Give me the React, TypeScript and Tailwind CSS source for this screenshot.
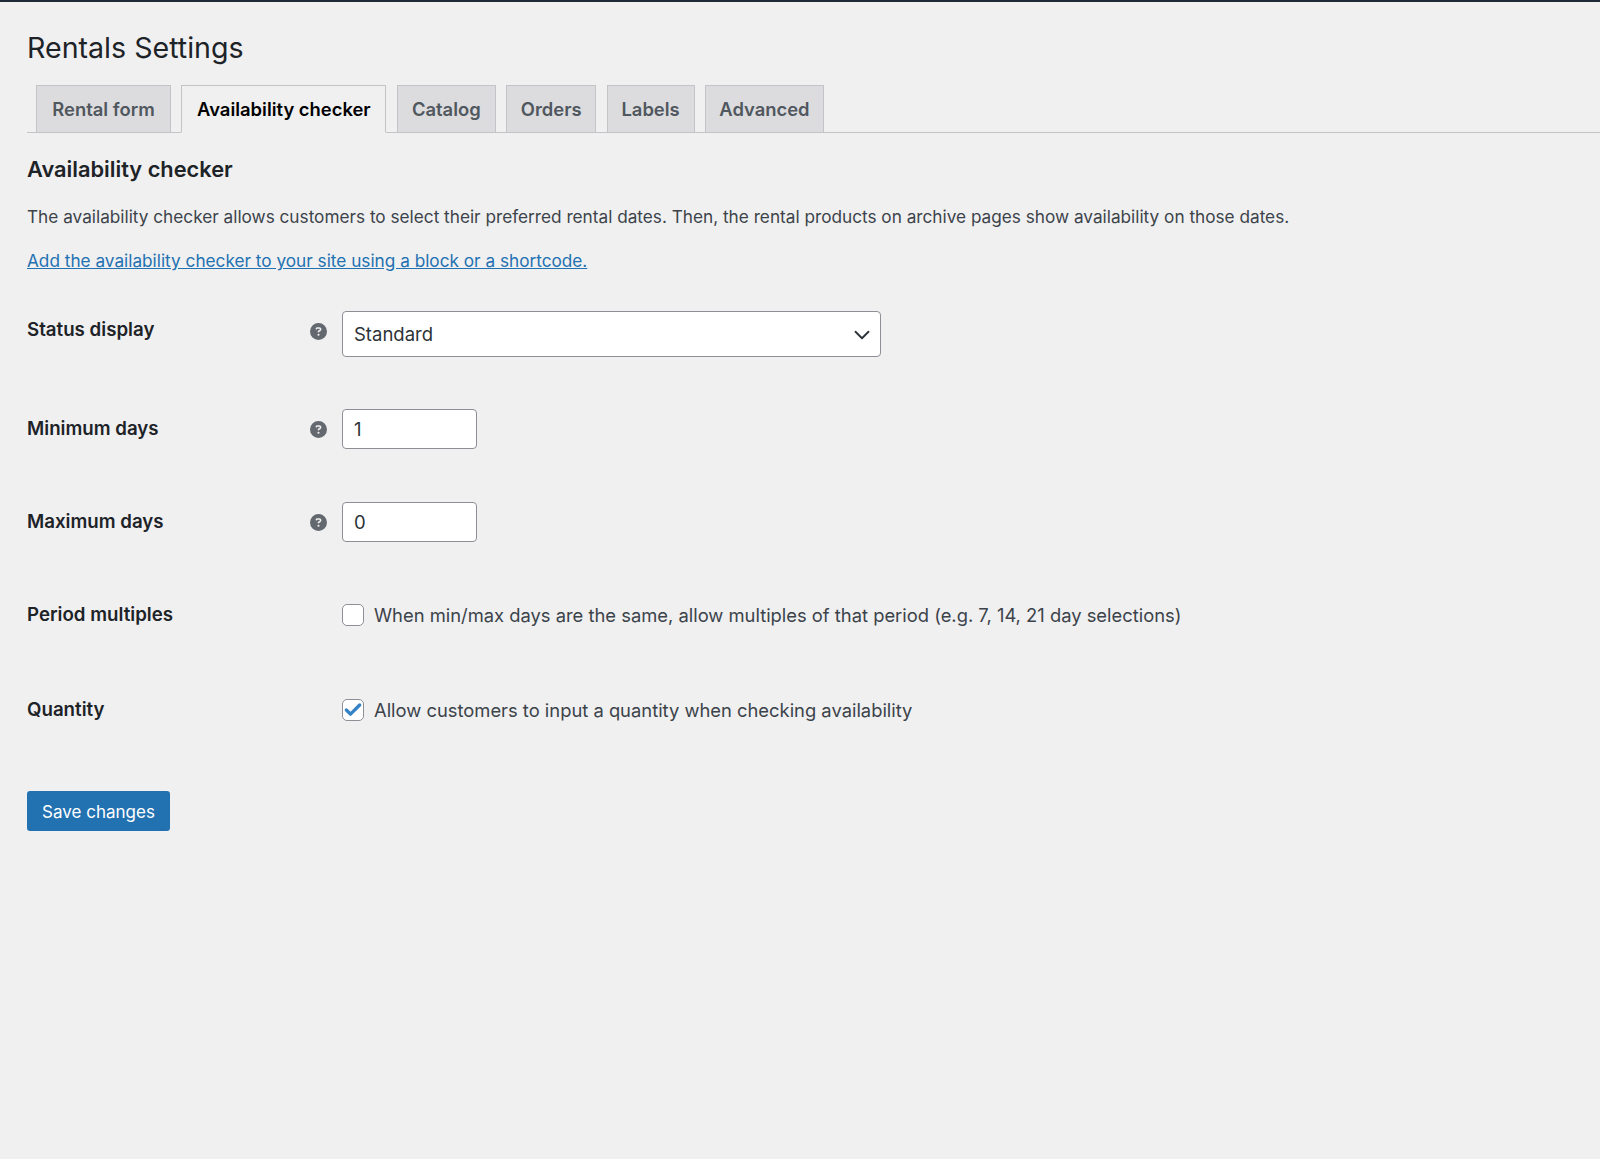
import React from "react";
import { FaCircleQuestion } from "react-icons/fa6";
import { ChevronDown, Check } from "lucide-react";

const tabs = [
  { name: "Rental form", width: "w-[135px]" },
  { name: "Availability checker", width: "w-[205px]", active: true },
  { name: "Catalog", width: "w-[99px]" },
  { name: "Orders", width: "w-[90px]" },
  { name: "Labels", width: "w-[88px]" },
  { name: "Advanced", width: "w-[119px]" },
];

const Row = ({
  label,
  help,
  className,
  labelClass,
  helpClass,
  children,
}: {
  label: string;
  help?: boolean;
  className: string;
  labelClass?: string;
  helpClass?: string;
  children: React.ReactNode;
}) => (
  <div className={`flex items-center ${className}`}>
    <div className={`w-[282px] shrink-0 text-[18.7px] font-semibold text-[#1d2327] ${labelClass ?? ""}`}>{label}</div>
    <div className={`w-[33px] shrink-0 pl-[1px] ${helpClass ?? ""}`}>
      {help && <FaCircleQuestion className="w-[17px] h-[17px] text-[#646970]" />}
    </div>
    {children}
  </div>
);

const Checkbox = ({ checked }: { checked?: boolean }) => (
  <span className="w-[22px] h-[22px] bg-white border-[1.5px] border-[#8c8f94] rounded-[5px] flex items-center justify-center shrink-0">
    {checked && <Check className="w-[20px] h-[20px] text-[#3582c4]" strokeWidth={4} />}
  </span>
);

export default function App() {
  return (
    <div className="h-[1159px] overflow-hidden bg-[#f0f0f1] border-t-2 border-[#1f2b3a] pl-[27px] font-['Inter','Liberation_Sans',sans-serif]">
      <h1 className="text-[28.6px] leading-[36px] pt-[28px] text-[#1d2327]">Rentals Settings</h1>

      <div className="flex mt-[19px] pl-[9px] gap-[10.4px] border-b border-[#c3c4c7] h-[48px]">
        {tabs.map((t) => (
          <div
            key={t.name}
            className={`${t.width} h-[48px] pt-[1px] flex items-center justify-center border border-[#c3c4c7] text-[18.4px] font-semibold ${
              t.active ? "bg-[#f0f0f1] border-b-[#f0f0f1] text-black" : "bg-[#dcdcde] text-[#50575e]"
            }`}
          >
            {t.name}
          </div>
        ))}
      </div>

      <h2 className="text-[21.8px] leading-[28px] font-semibold text-[#1d2327] mt-[22px]">Availability checker</h2>
      <p className="text-[17.22px] leading-[24px] text-[#3c434a] mt-[22px]">
        The availability checker allows customers to select their preferred rental dates. Then, the rental products on archive pages show availability on those dates.
      </p>
      <p className="text-[17.22px] leading-[24px] mt-[20px]">
        <a className="text-[#2271b1] underline" href="#">Add the availability checker to your site using a block or a shortcode.</a>
      </p>

      <Row label="Status display" help className="mt-[38px]" labelClass="mb-[8px]" helpClass="mb-[5px]">
        <div className="w-[539px] h-[46px] pt-[1px] bg-white border border-[#8c8f94] rounded-[4px] flex items-center justify-between pl-[11px] pr-[5px] text-[18.5px] text-[#2c3338]">
          Standard
          <ChevronDown className="w-[26px] h-[26px] text-[#2c3338]" strokeWidth={1.7} />
        </div>
      </Row>
      <Row label="Minimum days" help className="mt-[52px]">
        <div className="w-[135px] h-[40px] pt-[1px] bg-white border border-[#8c8f94] rounded-[4px] flex items-center pl-[11px] text-[18.5px] text-[#2c3338]">1</div>
      </Row>
      <Row label="Maximum days" help className="mt-[53px]">
        <div className="w-[135px] h-[40px] pt-[1px] bg-white border border-[#8c8f94] rounded-[4px] flex items-center pl-[11px] text-[18.5px] text-[#2c3338]">0</div>
      </Row>
      <Row label="Period multiples" className="mt-[58px]">
        <Checkbox />
        <span className="ml-[10px] pt-[2px] text-[18.38px] text-[#3c434a]">When min/max days are the same, allow multiples of that period (e.g. 7, 14, 21 day selections)</span>
      </Row>
      <Row label="Quantity" className="mt-[66px]">
        <Checkbox checked />
        <span className="ml-[10px] pt-[1px] text-[18.38px] text-[#3c434a]">Allow customers to input a quantity when checking availability</span>
      </Row>

      <button className="block mt-[67px] w-[143px] h-[40px] pt-[4px] bg-[#2271b1] rounded-[3px] text-white text-[17px]">Save changes</button>
    </div>
  );
}
